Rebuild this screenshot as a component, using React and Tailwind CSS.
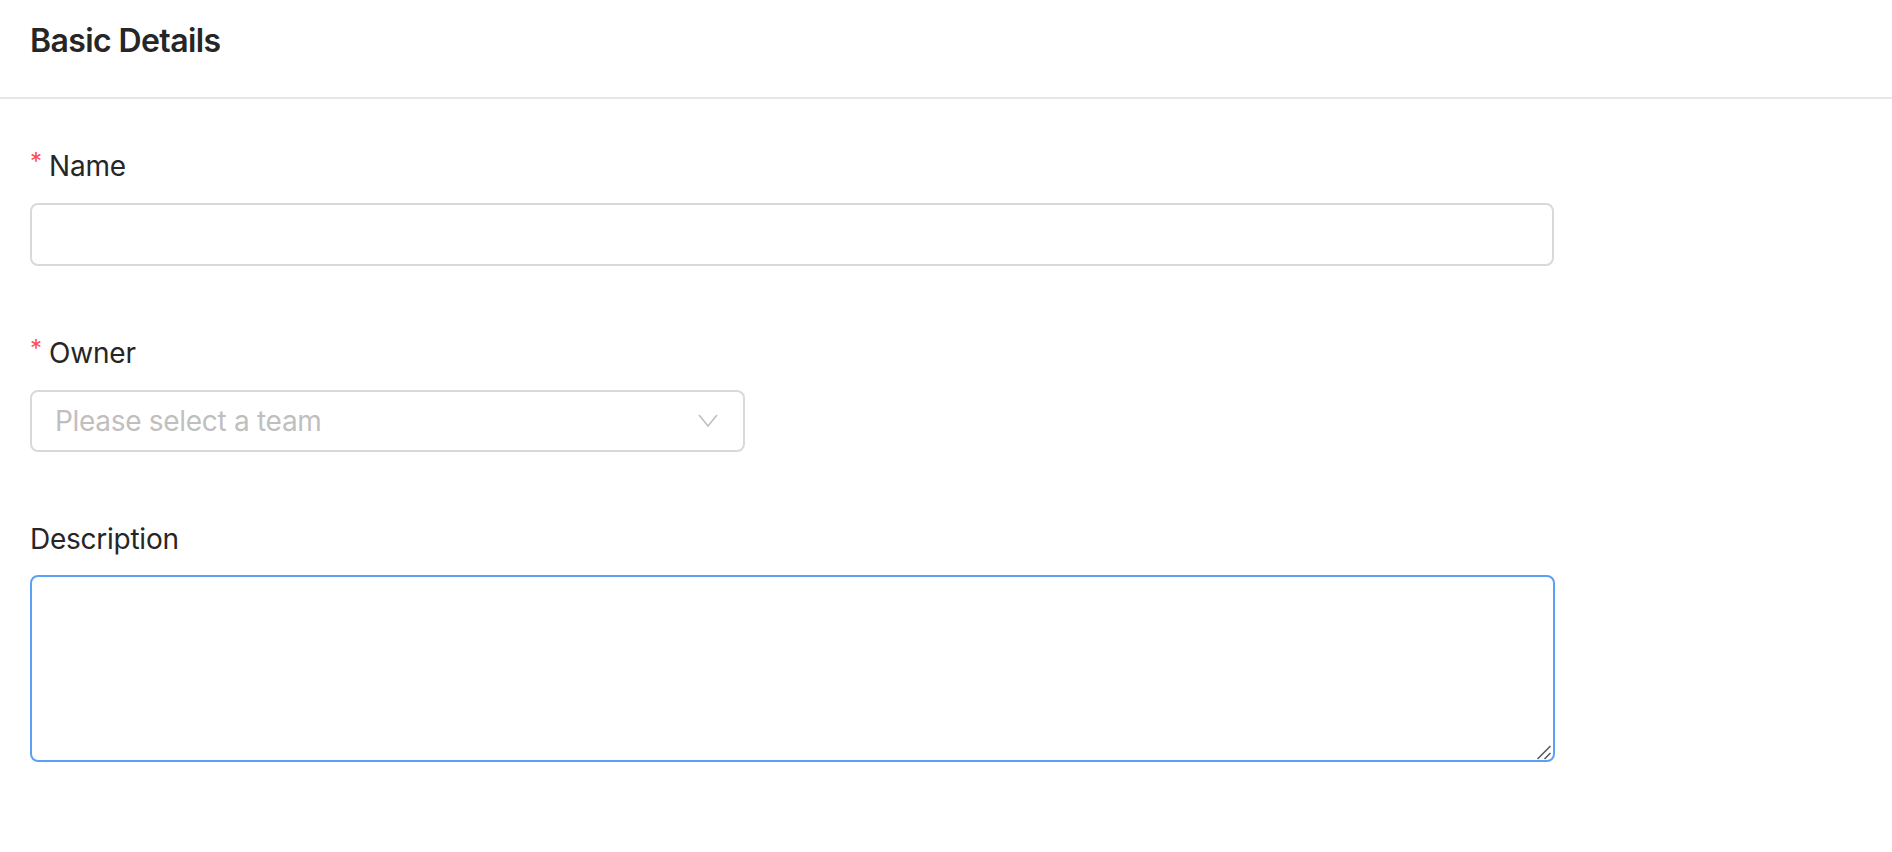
export default function App() {
  const font = { fontFamily: 'Inter, "Noto Sans", "Liberation Sans", sans-serif' };
  return (
    <div className="w-[1892px] h-[852px] bg-white text-[#262626]" style={font}>
      <div className="pt-[21px] pb-[36px] pl-[30px] border-b-2 border-[#e6e6e6]">
        <h1 className="h-[40px] leading-[40px] text-[32px] font-semibold tracking-[-0.6px]">Basic Details</h1>
      </div>
      <div className="pl-[30px] pt-[47px]">
        <div className="flex flex-col">
          <label className="h-[40px] leading-[40px] text-[28px] tracking-[-0.2px] flex items-center">
            <span className="text-[#ff4d4f] text-[24px] mr-[9px] -mt-[9px] w-[10px]">*</span>
            Name
          </label>
          <input className="mt-[17px] w-[1524px] h-[63px] border-2 border-[#d9d9d9] rounded-[8px] outline-none px-[22px] text-[28px]" />
        </div>
        <div className="flex flex-col mt-[67px]">
          <label className="h-[40px] leading-[40px] text-[28px] tracking-[-0.2px] flex items-center">
            <span className="text-[#ff4d4f] text-[24px] mr-[9px] -mt-[9px] w-[10px]">*</span>
            Owner
          </label>
          <div className="mt-[17px] w-[715px] h-[62px] border-2 border-[#d9d9d9] rounded-[8px] flex items-center pl-[23px] pr-[25px] justify-between">
            <span className="text-[28px] text-[#bfbfbf] tracking-[-0.3px]">Please select a team</span>
            <svg width="20" height="16" viewBox="0 0 20 16" fill="none">
              <path d="M1 2 L10 13 L19 2" stroke="#bfbfbf" strokeWidth="1.6" />
            </svg>
          </div>
        </div>
        <div className="flex flex-col mt-[67px]">
          <label className="h-[40px] leading-[40px] text-[28px] tracking-[-0.25px]">Description</label>
          <div className="relative mt-[16px] w-[1525px] h-[187px]">
            <textarea className="w-full h-full resize-none border-2 border-[#5aa0f6] rounded-[8px] outline-none px-[22px] py-[10px] text-[28px]" />
            <svg className="absolute right-[3px] bottom-[2px]" width="16" height="16" viewBox="0 0 16 16" fill="none">
              <path d="M1.5 15 L14.5 2" stroke="#5a5a5a" strokeWidth="1.6" />
              <path d="M8.5 15 L14.5 9" stroke="#5a5a5a" strokeWidth="1.6" />
            </svg>
          </div>
        </div>
      </div>
    </div>
  );
}
